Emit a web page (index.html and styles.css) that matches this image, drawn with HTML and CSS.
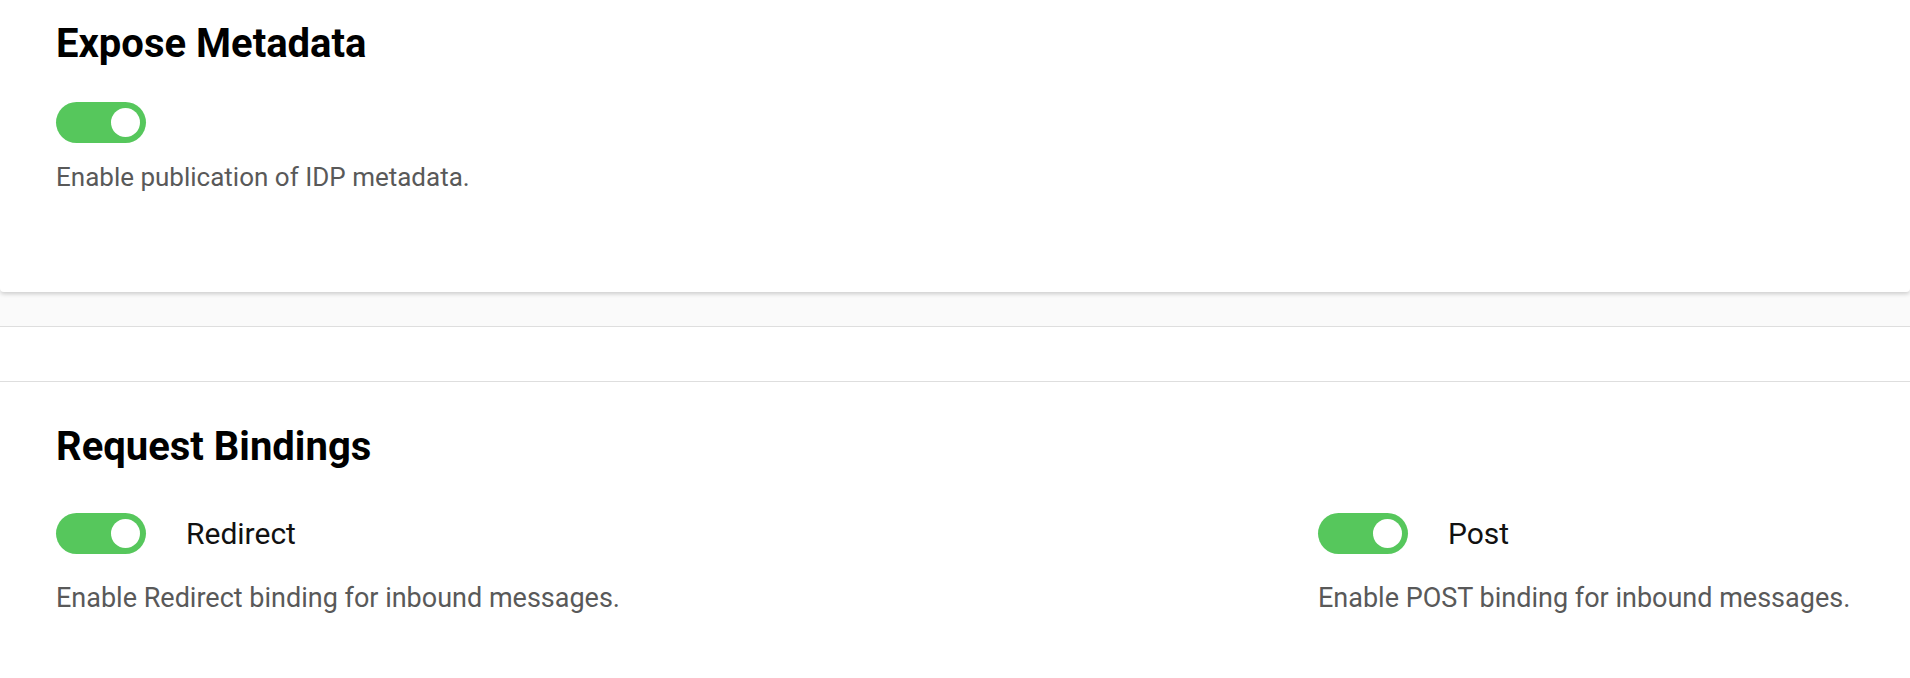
FILE: index.html
```html
<!DOCTYPE html>
<html lang="en">
<head>
  <meta charset="UTF-8" />
  <meta name="viewport" content="width=device-width, initial-scale=1.0"/>
  <title>IDP Settings</title>
  <link rel="stylesheet" href="styles.css">
</head>
<body>
  <div class="card">
    <h2>Expose Metadata</h2>
    <div class="field">
      <label class="switch">
        <input type="checkbox" checked>
        <span class="slider"></span>
      </label>
    </div>
    <p class="hint">Enable publication of IDP metadata.</p>
  </div>

  <div class="gap"></div>

  <div class="panel">
    <div class="panel-head"></div>
    <div class="panel-body">
      <h2>Request Bindings</h2>
      <div class="bindings">
        <div class="binding">
          <div class="field">
            <label class="switch">
              <input type="checkbox" checked>
              <span class="slider"></span>
            </label>
            <span class="label">Redirect</span>
          </div>
          <p class="hint">Enable Redirect binding for inbound messages.</p>
        </div>
        <div class="binding">
          <div class="field">
            <label class="switch">
              <input type="checkbox" checked>
              <span class="slider"></span>
            </label>
            <span class="label">Post</span>
          </div>
          <p class="hint">Enable POST binding for inbound messages.</p>
        </div>
      </div>
    </div>
  </div>
</body>
</html>
```

FILE: styles.css
```css
:root {
  --green: #56c75c;
  --hint: #595959;
  --line: #dedede;
}
body {
  font-family: Roboto, 'Liberation Sans', sans-serif;
  background-color: #fff;
  color: #111;
  margin: 0;
  padding: 0;
}
h2 {
  font-size: 40px;
  font-weight: 700;
  line-height: 1.2;
  margin: 0;
  color: #000;
}
.card {
  background-color: #fff;
  height: 292px;
  box-sizing: border-box;
  padding: 20px 56px 0;
  border-radius: 0 0 4px 4px;
  box-shadow: 0 2px 4px rgba(0,0,0,0.18);
  position: relative;
}
.card .field {
  margin-top: 34px;
}
.card .hint {
  margin-top: 16px;
}
.gap {
  height: 34px;
  background-color: #fafafa;
}
.panel {
  background-color: #fff;
  border-top: 1px solid var(--line);
}
.panel-head {
  height: 54px;
  border-bottom: 1px solid var(--line);
}
.panel-body {
  padding: 41px 56px 40px;
}
.panel-body h2 {
  margin-bottom: 42px;
}
.bindings {
  display: grid;
  grid-template-columns: 1262px 1fr;
}
.binding .hint {
  font-size: 27px;
  margin-top: 26px;
}
.field {
  display: flex;
  align-items: center;
  gap: 40px;
}
.label {
  font-size: 30px;
  color: #111;
}
.hint {
  font-size: 26px;
  line-height: 1.4;
  color: var(--hint);
  margin: 20px 0 0;
}
.switch {
  position: relative;
  display: inline-block;
  width: 90px;
  height: 41px;
  flex-shrink: 0;
}
.switch input {
  opacity: 0;
  width: 0;
  height: 0;
}
.slider {
  position: absolute;
  inset: 0;
  background-color: #ccc;
  border-radius: 21px;
  cursor: pointer;
}
.slider::before {
  content: "";
  position: absolute;
  width: 29px;
  height: 29px;
  left: 6px;
  top: 6px;
  border-radius: 50%;
  background-color: #fff;
  transition: transform 0.2s;
}
.switch input:checked + .slider {
  background-color: var(--green);
}
.switch input:checked + .slider::before {
  transform: translateX(49px);
}
```
